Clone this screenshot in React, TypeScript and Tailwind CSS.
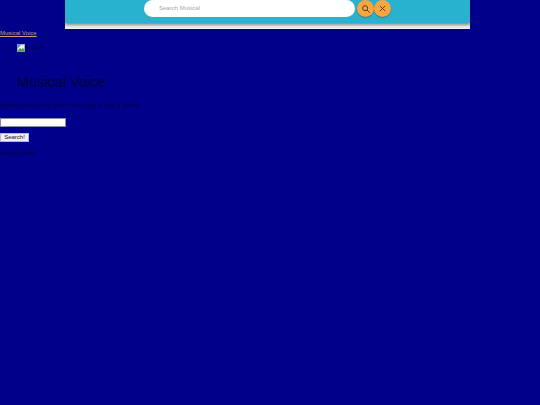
export default function App() {
  return (
    <div className="min-h-[405px] bg-[#00008b] font-['Liberation_Sans',Arial,sans-serif] text-[6px] text-[#00003a]">
      <div className="ml-[65px] w-[405px] bg-[#f0f0f0]">
        <div className="flex h-[23px] bg-[#29b1d0] pl-[79px] shadow-[0_2px_3px_rgba(0,0,0,0.45)]">
          <div className="flex h-[17px] w-[211px] items-center rounded-full bg-white pl-[15px] text-[6px] text-[#a8a8a8]">Search Musical</div>
          <div className="ml-[2px] flex h-[17px] w-[17px] items-center justify-center rounded-full bg-[#f9a63e] shadow-[0_1px_1px_rgba(0,0,0,0.25)]">
            <svg width="10" height="10" viewBox="0 0 24 24" fill="none" stroke="#4a4030" strokeWidth="2.4">
              <circle cx="10" cy="10" r="6" />
              <path d="M14.5 14.5 21 21" />
            </svg>
          </div>
          <div className="flex h-[17px] w-[17px] items-center justify-center rounded-full bg-[#f9a63e] shadow-[0_1px_1px_rgba(0,0,0,0.25)]">
            <svg width="9" height="9" viewBox="0 0 24 24" fill="none" stroke="#4a4030" strokeWidth="2.6">
              <path d="M5 5 19 19M19 5 5 19" />
            </svg>
          </div>
        </div>
        <div className="h-[6px]" />
      </div>

      <a className="mt-[1px] block leading-[7px] text-[#c99a8e] underline">Musical Voice</a>

      <ul className="mt-[6px] list-disc pl-[17px] marker:text-[#00003a]">
        <li className="h-[9px] leading-[9px]">
          <span className="inline-flex items-center align-top">
            <svg width="8" height="8" viewBox="0 0 16 16">
              <rect x="0.5" y="0.5" width="15" height="15" fill="#e8eef5" stroke="#9aa4b0" />
              <path d="M1 14 6 8l3 3 3-3 3 4v3H1z" fill="#4f9a4a" />
              <path d="M1 1h8L1 9z" fill="#5b8fd8" />
            </svg>
            <span>english</span>
          </span>
        </li>
        <li className="mt-[3px] h-[9px]" />
        <li className="mt-[10px] leading-[17px]">
          <span className="text-[14.5px] leading-[17px]">Musical Voice</span>
        </li>
      </ul>

      <p className="mt-[8px] text-[5.9px] leading-[7px]">Double click on any word in the page to type a search</p>
      <input className="mt-[9px] block h-[9px] w-[66px] border border-[#8a8aa8] bg-white" />
      <button className="mt-[6px] block h-[9px] w-[29px] border border-[#b8b8b8] bg-[#efefef] text-center text-[6px] leading-[7px] text-[#111111]">Search!</button>
      <p className="mt-[8px] leading-[7px]">Musical Voice</p>
    </div>
  );
}
